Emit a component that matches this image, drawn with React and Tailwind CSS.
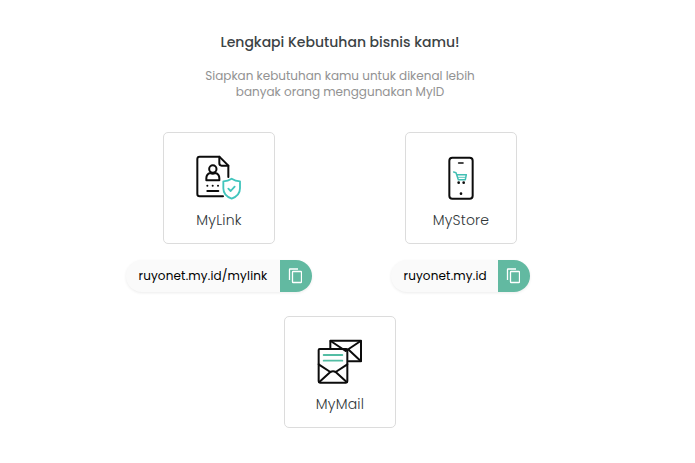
const fontStack = "font-['Poppins','Inter',sans-serif]";

function LinkIcon() {
  return (
    <svg viewBox="122 87 141 138" className="h-[46px] w-[47px]" fill="none" strokeLinecap="round" strokeLinejoin="round">
      <g stroke="#0c0c0c" strokeWidth="6">
        <path d="M203 214H133Q126 214 126 207V102Q126 95 133 95H192L219 122V156" />
        <path d="M192 95V115Q192 122 199 122H219" />
        <circle cx="172.500" cy="132" r="11" />
        <path d="M153 166V160Q153 147 165 144Q172 149 180 144Q192 147 192 160V166Z" />
        <path d="M156 198H189" />
        <path d="M156 182h.1M172 182h.1M188 182h.1" />
      </g>
      <g stroke="#41c5bd" strokeWidth="5.500">
        <path d="M229 161Q240 168 254 169V190Q254 212 229 221Q204 212 204 190V169Q218 168 229 161Z" fill="#fff" />
        <path d="M219 191L226 198L238 185" />
      </g>
    </svg>
  );
}

function StoreIcon() {
  return (
    <svg viewBox="120 87 141 138" className="h-[46px] w-[47px]" fill="none" strokeLinecap="round" strokeLinejoin="round">
      <rect x="154" y="98" width="70" height="123" rx="9" stroke="#0c0c0c" strokeWidth="6" />
      <path d="M182 114H195" stroke="#0c0c0c" strokeWidth="5" />
      <g stroke="#41bfb4" strokeWidth="4.500">
        <path d="M167 141L174 143L181 164H202L205 149H176" />
        <path d="M180 157H202" strokeWidth="2.500" />
      </g>
      <g fill="#0c0c0c">
        <circle cx="182" cy="173" r="4" />
        <circle cx="197" cy="173" r="4" />
        <circle cx="189" cy="206" r="4" />
      </g>
    </svg>
  );
}

function MailIcon() {
  return (
    <svg viewBox="124 85 141 138" className="h-[46px] w-[47px]" fill="none" strokeLinecap="round" strokeLinejoin="round">
      <g stroke="#0c0c0c" strokeWidth="6">
        <path d="M164 115V93H256V155H219" />
        <path d="M165 94L210 124L255 94M219 120L255 154" />
        <path d="M129 164V121Q129 118 132 118H212Q215 118 215 121V164" />
        <path d="M129 164V215Q129 219 133 219H211Q215 219 215 215V164L180 187Q172 183 164 187Z" />
        <path d="M131 217L164 187M213 217L180 187" />
      </g>
      <path d="M144 136H200M144 153H200" stroke="#53bda4" strokeWidth="5.500" />
    </svg>
  );
}

function CopyIcon() {
  return (
    <svg viewBox="0 0 14 16" className="mr-0.5 h-4 w-3.5" fill="none" stroke="#fff" strokeWidth="1.300" strokeLinejoin="round">
      <path d="M1.500 12V1.500Q1.500 1 2 1H10" />
      <rect x="4.500" y="3.500" width="9" height="11" rx=".6" />
    </svg>
  );
}

function Card({ icon, label }) {
  return (
    <div className="flex h-28 w-28 flex-col items-center rounded-[5px] border border-[#dcdcdc] bg-white pt-[21px]">
      {icon}
      <span className="mt-2 text-sm leading-6 font-light tracking-[0.2px] text-[#303638]">{label}</span>
    </div>
  );
}

function LinkPill({ text, width }) {
  return (
    <div className={`mt-4 flex h-8 overflow-hidden rounded-full bg-[#fafafa] shadow-[0_1px_3px_rgba(0,0,0,0.08)] ${width}`}>
      <span className="flex-1 pl-[12.5px] text-xs leading-8 tracking-[0.15px] whitespace-nowrap text-black">{text}</span>
      <button aria-label="Copy" className="flex w-8 items-center justify-center bg-[#62b9a1]">
        <CopyIcon />
      </button>
    </div>
  );
}

export default function App() {
  return (
    <main className={`h-[463px] w-full overflow-hidden bg-white ${fontStack}`}>
      <div className="flex w-[680px] flex-col items-center pt-8">
        <h1 className="text-sm leading-5 font-medium whitespace-nowrap text-[#3c4345]">Lengkapi Kebutuhan bisnis kamu!</h1>
        <p className="mt-4 text-center text-xs leading-4 whitespace-nowrap text-[#929292]">
          Siapkan kebutuhan kamu untuk dikenal lebih
          <br />
          banyak orang menggunakan MyID
        </p>
        <section className="mt-8 grid grid-cols-[242px_242px]">
          <div className="flex flex-col items-center">
            <Card icon={<LinkIcon />} label="MyLink" />
            <LinkPill text="ruyonet.my.id/mylink" width="w-[186px]" />
          </div>
          <div className="flex flex-col items-center">
            <Card icon={<StoreIcon />} label="MyStore" />
            <LinkPill text="ruyonet.my.id" width="mr-px w-[139px]" />
          </div>
        </section>
        <section className="mt-6">
          <Card icon={<MailIcon />} label="MyMail" />
        </section>
      </div>
    </main>
  );
}
